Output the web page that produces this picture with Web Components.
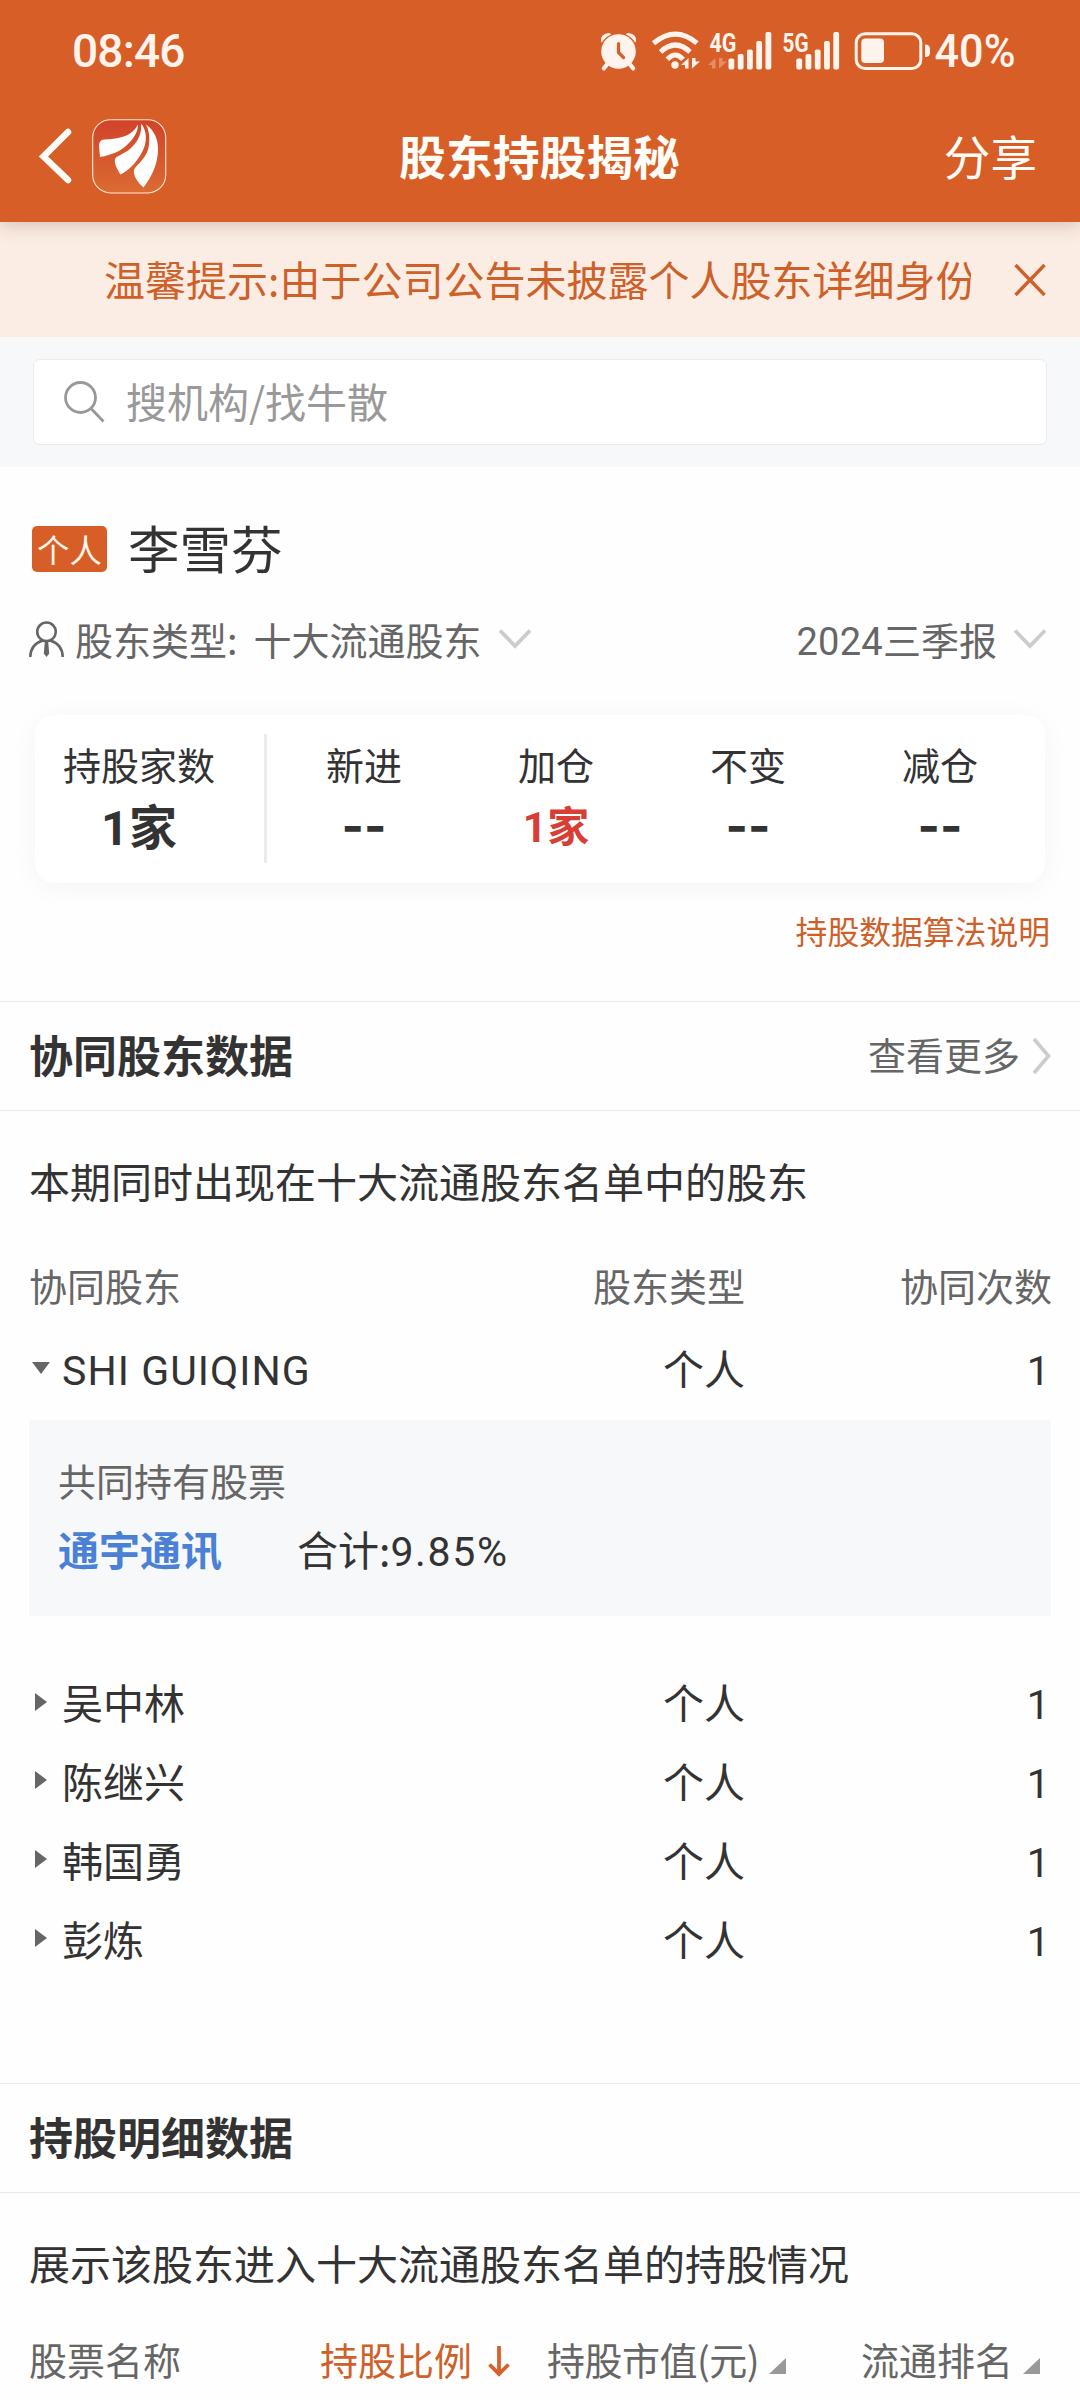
<!DOCTYPE html>
<html lang="zh-CN">
<head>
<meta charset="UTF-8">
<meta name="viewport" content="width=device-width, initial-scale=1.0">
<title>股东持股揭秘</title>
<style>
  :root {
    --brand: #d85e28;
    --link: #ce6029;
    --ink: #333;
    --muted: #666;
    --line: #e9e9e9;
    --panel: #f7f8fa;
  }
  body {
    margin: 0;
    width: 1080px;
    height: 2400px;
    overflow: hidden;
    background: #fefefe;
    color: var(--ink);
    font-family: "Noto Sans CJK SC", "Noto Sans", sans-serif;
    font-size: 41px;
    line-height: 60px;
  }
</style>
</head>
<body>
  <status-bar time="08:46" battery="40"></status-bar>
  <nav-bar>股东持股揭秘<span slot="action">分享</span></nav-bar>
  <notice-bar>温馨提示:由于公司公告未披露个人股东详细身份信息</notice-bar>
  <search-box>搜机构/找牛散</search-box>

  <holder-profile tag="个人">
    李雪芬
    <drop-down slot="type">十大流通股东</drop-down>
    <drop-down slot="period"><latin-text>2024</latin-text>三季报</drop-down>
  </holder-profile>

  <stat-card>
    <stat-item slot="total" label="持股家数" value="1家" total></stat-item>
    <stat-item label="新进" value="--"></stat-item>
    <stat-item label="加仓" value="1家" up></stat-item>
    <stat-item label="不变" value="--"></stat-item>
    <stat-item label="减仓" value="--"></stat-item>
    <span slot="note">持股数据算法说明</span>
  </stat-card>

  <data-section heading="协同股东数据" more="查看更多" style="height:1082px">
    <span slot="desc">本期同时出现在十大流通股东名单中的股东</span>
    <partner-table>
      <partner-row name="SHI GUIQING" type="个人" count="1" open>
        <shared-stock label="共同持有股票" stock="通宇通讯" total="合计:9.85%"></shared-stock>
      </partner-row>
      <partner-row name="吴中林" type="个人" count="1"></partner-row>
      <partner-row name="陈继兴" type="个人" count="1"></partner-row>
      <partner-row name="韩国勇" type="个人" count="1"></partner-row>
      <partner-row name="彭炼" type="个人" count="1"></partner-row>
    </partner-table>
  </data-section>

  <data-section heading="持股明细数据">
    <span slot="desc">展示该股东进入十大流通股东名单的持股情况</span>
    <detail-head></detail-head>
  </data-section>

<script>
  // Base: renders the template of each element into an open shadow root
  class BaseElement extends HTMLElement {
    constructor() {
      super();
      this.attachShadow({ mode: "open" });
    }
    connectedCallback() {
      this.shadowRoot.innerHTML = this.render().trim();
    }
    attr(name) {
      return this.getAttribute(name) || "";
    }
    // Digits and latin letters use their own face
    mixed(name) {
      return this.attr(name).replace(/[A-Za-z0-9.%][A-Za-z0-9.% ]*/g, "<latin-text>$&</latin-text>");
    }
  }

  class LatinText extends BaseElement {
    render() {
      return `
        <style>
          :host { font-family: Roboto, sans-serif; line-height: 0; letter-spacing: .007em; }
        </style><slot></slot>`;
    }
  }

  class StatusBar extends BaseElement {
    bars(x) {
      const tops = [58.5, 54, 49.5, 41, 32];
      return tops.map((y, i) =>
        `<rect x="${x + i * 9.25}" y="${y}" width="5.8" height="${69.5 - y}" rx="1.8"/>`).join("");
    }
    render() {
      return `
        <style>
          :host {
            display: flex;
            justify-content: space-between;
            height: 96px;
            position: relative;
            z-index: 3;
            background: var(--brand);
            color: #fff4ed;
            font-family: Roboto, sans-serif;
            font-size: 46px;
            font-weight: 500;
            line-height: 102px;
          }
          .time { padding-left: 72px; letter-spacing: -.8px; }
          svg { display: block; width: 440px; height: 96px; margin-right: 42px; fill: currentColor; }
          .net { font-size: 26px; font-weight: 700; }
        </style>
        <span class="time">${this.attr("time")}</span>
        <svg viewBox="598 0 440 96">
          <g class="alarm">
            <circle cx="618.5" cy="51.5" r="17.3"/>
            <path d="M601 41.5Q600 34 608.5 33Q611 33.2 611 34.5Q605 37 602 42.5ZM636 41.5Q637 34 628.5 33Q626 33.2 626 34.5Q632 37 635 42.5Z"/>
            <path d="M609 62L603.8 68.3M628 62L633.2 68.3" stroke="currentColor" stroke-width="4.2" stroke-linecap="round"/>
            <path d="M618.5 43.5V52.5L623.5 57.5" fill="none" stroke="var(--brand)" stroke-width="3.2" stroke-linecap="round"/>
          </g>
          <g fill="none" stroke="currentColor" stroke-width="5">
            <path d="M653.5 43.2Q675.5 25 697 43.2"/>
            <path d="M660.5 52Q675.5 38 690 52"/>
            <path d="M667.3 59.3Q675.5 50.5 683 59.3"/>
          </g>
          <circle cx="675" cy="65" r="3.7"/>
          <path d="M688.5 58V68.5H685V65H681ZM692 68.5V58H695.5V61.5H700Z"/>
          <text class="net" x="709.5" y="51.5" textLength="27" lengthAdjust="spacingAndGlyphs">4G</text>
          <path d="M715.5 58V68.5H712V65H708ZM719 68.5V58H722.5V61.5H727Z" opacity=".32"/>
          ${this.bars(728.5)}
          <text class="net" x="782.5" y="51.5" textLength="26" lengthAdjust="spacingAndGlyphs">5G</text>
          ${this.bars(796.3)}
          <rect x="856.2" y="33.7" width="64.6" height="34.8" rx="9" fill="none" stroke="currentColor" stroke-width="3"/>
          <rect x="861.3" y="38.5" width="22.7" height="24.5" rx="4"/>
          <path d="M925 44.5Q930 44.5 930 49V52.5Q930 57 925 57Z"/>
          <text x="934.5" y="67.3" textLength="81" lengthAdjust="spacingAndGlyphs">${this.attr("battery")}%</text>
        </svg>`;
    }
  }

  class NavBar extends BaseElement {
    render() {
      return `
        <style>
          :host {
            display: grid;
            grid-template-columns: 1fr auto 1fr;
            align-items: center;
            height: 126px;
            box-sizing: border-box;
            padding: 0 43px 6px 38px;
            background: var(--brand);
            color: #fffdf8;
            font-size: 46.6px;
            position: relative;
            z-index: 2;
            box-shadow: 0 2px 18px rgba(110, 60, 35, .28);
          }
          .left { display: flex; align-items: center; gap: 20px; }
          .back { width: 34px; height: 56px; }
          .logo { width: 75px; height: 75px; }
          svg { display: block; }
          h1 { margin: -3px -4px 0 0; font-size: 46.8px; font-weight: 700; }
          ::slotted(span) { margin-top: -3px; text-align: right; }
        </style>
        <div class="left">
          <svg class="back" viewBox="0 0 34 56">
            <path d="M30 4L5.5 28.5L30 52" fill="none" stroke="currentColor" stroke-width="6.5" stroke-linecap="round"/>
          </svg>
          <svg class="logo" viewBox="0 0 75 75">
            <defs>
              <linearGradient id="g" x1="0" y1="0" x2="0" y2="1">
                <stop offset="0" stop-color="#d1432a"/>
                <stop offset="1" stop-color="#da6c32"/>
              </linearGradient>
            </defs>
            <rect x=".7" y=".7" width="73" height="73.3" rx="18" fill="url(#g)" stroke="#ffe9d8" stroke-width="1.1"/>
            <g fill="#fff">
              <path d="M46 5.5C40 17 28 20 12 20.5Q7 21 7 27L8 38C20 36 29 32 36 25C43 18 46 12 46 5.5Z"/>
              <path d="M49 4.5C55 11 56 24 49 35C44 44 37 51 28.5 55.5C25 50 22 44 23 40C24 37 33 35 40 28C47 21 50 13 49 4.5Z"/>
              <path d="M54 5.5C63 12 66 21 66 30C66 45 60 57 51.5 68.5C45 63 41 56 42 51C43 47 52 42 56 31C58 23 58 13 54 5.5Z"/>
            </g>
          </svg>
        </div>
        <h1><slot></slot></h1>
        <slot name="action"></slot>`;
    }
  }

  class NoticeBar extends BaseElement {
    render() {
      return `
        <style>
          :host {
            display: flex;
            align-items: center;
            justify-content: space-between;
            height: 115px;
            padding: 0 33px 0 104px;
            background: #fbede4;
            color: var(--link);
          }
          .text { width: 867px; margin-top: -4px; overflow: hidden; white-space: nowrap; }
          svg { width: 34px; height: 36px; }
        </style>
        <div class="text"><slot></slot></div>
        <svg viewBox="0 0 34 36">
          <path d="M2.5 3L31.5 33M31.5 3L2.5 33" fill="none" stroke="currentColor" stroke-width="3.4"/>
        </svg>`;
    }
  }

  class SearchBox extends BaseElement {
    render() {
      return `
        <style>
          :host { display: block; padding: 22px 33px; background: var(--panel); }
          .box {
            display: flex;
            align-items: center;
            gap: 20px;
            height: 86px;
            box-sizing: border-box;
            padding: 0 30px;
            border: 1px solid #ebebeb;
            border-radius: 7px;
            background: #fff;
            color: #999;
          }
          svg { width: 42px; height: 44px; }
          .hint { margin-top: -4px; }
        </style>
        <div class="box">
          <svg viewBox="0 0 42 44" fill="none" stroke="currentColor" stroke-width="2.8">
            <circle cx="16.5" cy="17.5" r="15"/>
            <path d="M27 28.5L39.5 41.5"/>
          </svg>
          <span class="hint"><slot></slot></span>
        </div>`;
    }
  }

  class DropDown extends BaseElement {
    render() {
      return `
        <style>
          :host { display: inline-flex; align-items: center; gap: 16px; }
          svg { width: 34px; height: 22px; }
        </style>
        <span><slot></slot></span>
        <svg viewBox="0 0 34 22">
          <path d="M2 2.5L17 18L32 2.5" fill="none" stroke="#ccc" stroke-width="3.8"/>
        </svg>`;
    }
  }

  class HolderProfile extends BaseElement {
    render() {
      return `
        <style>
          :host { display: block; height: 248px; padding: 0 33px 0 29px; font-size: 51.5px; }
          .name { display: flex; align-items: center; gap: 21px; padding: 50px 0 0 3px; }
          .tag {
            width: 75px;
            height: 46px;
            margin-top: 4px;
            border-radius: 5px;
            background: var(--brand);
            color: #fff6ea;
            font-size: 32.4px;
            line-height: 45px;
            text-align: center;
          }
          .filter {
            display: flex;
            align-items: center;
            padding-top: 32px;
            color: var(--muted);
            font-size: 38px;
          }
          .filter svg { width: 35px; height: 36px; margin-right: 11px; }
          .label { margin-right: 16px; }
          .spacer { flex: 1; }
        </style>
        <div class="name"><span class="tag">${this.attr("tag")}</span><slot></slot></div>
        <div class="filter">
          <svg viewBox="0 0 35 36" fill="none" stroke="currentColor" stroke-width="2.6">
            <circle cx="17.5" cy="10.8" r="9.3"/>
            <path d="M1.3 36C1.5 27 7 21.5 14 19.5M33.7 36C33.5 27 28 21.5 21 19.5"/>
            <path d="M15.8 21H19.2L20.2 32.5L17.5 36L14.8 32.5Z" fill="currentColor" stroke="none"/>
          </svg>
          <span class="label">股东类型:</span>
          <slot name="type"></slot>
          <span class="spacer"></span>
          <slot name="period"></slot>
        </div>`;
    }
  }

  class StatItem extends BaseElement {
    render() {
      const empty = this.attr("value") === "--";
      return `
        <style>
          :host { display: flex; flex-direction: column; align-items: center; width: 192px; }
          .label { font-size: 38px; line-height: 60px; }
          .value { font-size: 42px; font-weight: 700; line-height: 60px; white-space: nowrap; }
          .value.empty { padding-top: 2px; font-family: Inter, sans-serif; font-size: 48px; }
          :host([total]) .value { font-size: 48px; }
          :host([up]) .value { color: #d73e36; }
        </style>
        <span class="label">${this.attr("label")}</span>
        <span class="value ${empty ? "empty" : ""}">${this.mixed("value")}</span>`;
    }
  }

  class StatCard extends BaseElement {
    render() {
      return `
        <style>
          :host { display: block; height: 286px; }
          .card {
            display: flex;
            width: 1010px;
            height: 168px;
            margin-left: 35px;
            border-radius: 20px;
            background: #fff;
            box-shadow: 0 4px 28px rgba(0, 0, 0, .045);
          }
          .total {
            box-sizing: border-box;
            width: 232px;
            height: 129px;
            margin-top: 19px;
            padding-left: 8px;
            border-right: 3px solid #ebebeb;
          }
          .items { display: flex; padding: 19px 0 0 1px; }
          .note {
            padding: 17px 30px 0 0;
            color: var(--link);
            font-size: 31.8px;
            text-align: right;
          }
        </style>
        <div class="card">
          <div class="total"><slot name="total"></slot></div>
          <div class="items"><slot></slot></div>
        </div>
        <div class="note"><slot name="note"></slot></div>`;
    }
  }

  class DataSection extends BaseElement {
    render() {
      const more = this.attr("more");
      return `
        <style>
          :host { display: block; box-sizing: border-box; }
          .head {
            display: flex;
            align-items: center;
            justify-content: space-between;
            height: 108px;
            padding: 0 29px;
            border: solid var(--line);
            border-width: 1px 0;
          }
          h2 { margin: -4px 0 0; font-size: 44px; font-weight: 700; line-height: 60px; }
          .more { display: flex; align-items: center; gap: 12px; font-size: 38px; color: var(--muted); }
          .more span { margin-top: -4px; }
          .more svg { width: 19px; height: 38px; }
          .desc { padding: 39px 29px 0; }
        </style>
        <div class="head">
          <h2>${this.attr("heading")}</h2>
          ${more ? `<div class="more"><span>${more}</span>
            <svg viewBox="0 0 19 38"><path d="M2 2L16.5 19L2 36" fill="none" stroke="#ccc" stroke-width="3.6"/></svg>
          </div>` : ""}
        </div>
        <div class="desc"><slot name="desc"></slot></div>
        <slot></slot>`;
    }
  }

  class PartnerTable extends BaseElement {
    render() {
      return `
        <style>
          :host { display: block; padding: 45px 28px 0 29px; }
          .cols {
            display: grid;
            grid-template-columns: 1fr 200px 307px;
            margin-bottom: 22px;
            color: var(--muted);
            font-size: 38px;
          }
          .cols span + span { text-align: right; }
        </style>
        <div class="cols"><span>协同股东</span><span>股东类型</span><span>协同次数</span></div>
        <slot></slot>`;
    }
  }

  class PartnerRow extends BaseElement {
    render() {
      const open = this.hasAttribute("open");
      const arrow = open ? "M3 4H21L12 16Z" : "M6 1L18 10L6 19Z";
      return `
        <style>
          :host { display: block; margin-bottom: 18.9px; }
          .row { display: grid; grid-template-columns: 33px 1fr 200px 307px; align-items: center; }
          svg { width: 24px; height: 20px; margin-top: 1px; fill: var(--muted); }
          .name latin-text { letter-spacing: .026em; }
          .type, .count { text-align: right; }
          .count { padding-right: 2px; }
        </style>
        <div class="row">
          <svg viewBox="0 0 24 20"><path d="${arrow}"/></svg>
          <span class="name">${this.mixed("name")}</span>
          <span class="type">${this.attr("type")}</span>
          <span class="count">${this.mixed("count")}</span>
        </div>
        <slot></slot>`;
    }
  }

  class SharedStock extends BaseElement {
    render() {
      return `
        <style>
          :host {
            display: block;
            box-sizing: border-box;
            height: 196px;
            margin: 23px 1px 55px 0;
            padding: 30px 29px 0;
            background: var(--panel);
          }
          .label { color: var(--muted); font-size: 38px; }
          .line { display: flex; gap: 75px; padding-top: 8px; }
          b { color: #4a80d6; }
          latin-text { letter-spacing: .04em; }
        </style>
        <div class="label">${this.attr("label")}</div>
        <div class="line"><b>${this.attr("stock")}</b><span>${this.mixed("total")}</span></div>`;
    }
  }

  class DetailHead extends BaseElement {
    render() {
      const tri = `<svg class="tri" viewBox="0 0 17 16"><path d="M17 0V16H0Z" fill="#999"/></svg>`;
      return `
        <style>
          :host {
            display: grid;
            grid-template-columns: 291px 227px 314px 1fr;
            padding: 37px 0 0 29px;
            color: var(--muted);
            font-size: 38px;
          }
          span { display: flex; align-items: center; white-space: nowrap; }
          .active { color: var(--link); }
          .market { letter-spacing: -.5px; }
          .arrow { width: 22px; height: 32px; margin: 3px 0 0 16px; }
          .tri { width: 17px; height: 16px; margin: 13px 0 0 10px; }
        </style>
        <span>股票名称</span>
        <span class="active">持股比例
          <svg class="arrow" viewBox="0 0 22 32" fill="none" stroke="#d8602a" stroke-width="3.8"><path d="M11 1V28M1.5 19.5L11 29L20.5 19.5"/></svg>
        </span>
        <span class="market">持股市值(元)${tri}</span>
        <span>流通排名${tri}</span>`;
    }
  }

  customElements.define("latin-text", LatinText);
  customElements.define("status-bar", StatusBar);
  customElements.define("nav-bar", NavBar);
  customElements.define("notice-bar", NoticeBar);
  customElements.define("search-box", SearchBox);
  customElements.define("drop-down", DropDown);
  customElements.define("holder-profile", HolderProfile);
  customElements.define("stat-item", StatItem);
  customElements.define("stat-card", StatCard);
  customElements.define("data-section", DataSection);
  customElements.define("partner-table", PartnerTable);
  customElements.define("partner-row", PartnerRow);
  customElements.define("shared-stock", SharedStock);
  customElements.define("detail-head", DetailHead);
</script>
</body>
</html>
